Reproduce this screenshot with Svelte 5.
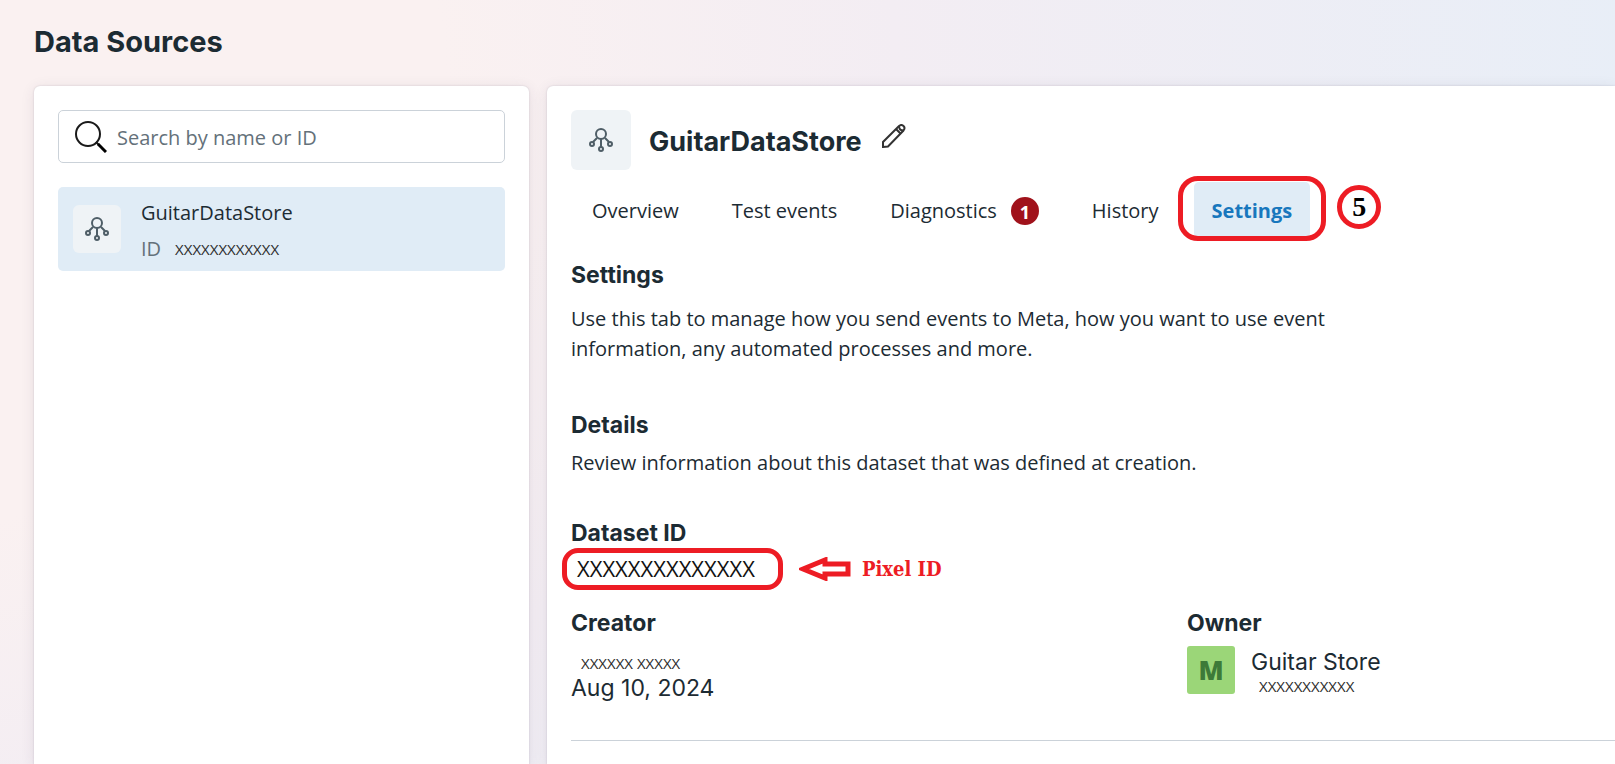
<script lang="ts">
  const tabs = [
    { id: 'overview', label: 'Overview' },
    { id: 'test-events', label: 'Test events' },
    { id: 'diagnostics', label: 'Diagnostics', alerts: 1 },
    { id: 'history', label: 'History' },
    { id: 'settings', label: 'Settings' },
  ];

  let activeTab = $state('settings');
  let query = $state('');
</script>

{#snippet datasetIcon()}
  <svg class="dataset-icon" viewBox="0 0 24 24" aria-hidden="true">
    <circle cx="12" cy="6" r="5" />
    <path d="M12 11v8M8 10l-4 4M16 10l4 4" />
    <circle cx="3" cy="16" r="2" />
    <circle cx="21" cy="16" r="2" />
    <circle cx="12" cy="21" r="2" />
  </svg>
{/snippet}

<div class="page">
  <h1>Data Sources</h1>

  <div class="columns">
    <aside class="card sidebar">
      <label class="search">
        <svg class="search-icon" viewBox="0 0 32 32" aria-hidden="true">
          <circle cx="13" cy="13" r="12" />
          <path class="neck" d="m21 21 3 3" />
          <path class="handle" d="m23 23 8 8" />
        </svg>
        <input type="text" placeholder="Search by name or ID" aria-label="Search by name or ID" bind:value={query} />
      </label>

      <button class="source" type="button">
        <span class="tile small">{@render datasetIcon()}</span>
        <span class="source-text">
          <span class="source-name">GuitarDataStore</span>
          <span class="source-id">ID <span class="masked">XXXXXXXXXXXX</span></span>
        </span>
      </button>
    </aside>

    <main class="card detail">
      <header>
        <span class="tile">{@render datasetIcon()}</span>
        <h2>GuitarDataStore</h2>
        <button class="edit" type="button" aria-label="Edit name">
          <svg viewBox="0 0 24 24" aria-hidden="true">
            <path d="M1 23v-5L17 2q2.500-2 4.500 0t0 4.500L6 22.500Z" />
            <path d="m14 5 4.500 4.500M17 2q0 4.500 4.500 4.500" />
          </svg>
        </button>
      </header>

      <nav class="tabs">
        {#each tabs as tab (tab.id)}
          <button
            class="tab"
            class:active={tab.id === activeTab}
            type="button"
            onclick={() => (activeTab = tab.id)}
          >
            {tab.label}
            {#if tab.alerts}
              <span class="badge">{tab.alerts}</span>
            {/if}
            {#if tab.id === 'settings'}
              <span class="marker tab-marker"></span>
            {/if}
          </button>
        {/each}
        <span class="step">5</span>
      </nav>

      <section class="intro">
        <h3>Settings</h3>
        <p>
          Use this tab to manage how you send events to Meta, how you want to use event
          information, any automated processes and more.
        </p>
      </section>

      <section class="about">
        <h3>Details</h3>
        <p>Review information about this dataset that was defined at creation.</p>
      </section>

      <section class="dataset">
        <h3>Dataset ID</h3>
        <div class="dataset-row">
          <span class="dataset-id">XXXXXXXXXXXXXX<span class="marker id-marker"></span></span>
          <svg class="arrow" viewBox="0 0 52 24" aria-hidden="true">
            <path d="M4 12 26 3v4h23v10H26v4Z" />
          </svg>
          <strong class="note">Pixel ID</strong>
        </div>
      </section>

      <section class="people">
        <div>
          <h3>Creator</h3>
          <p class="creator-name masked">XXXXXX XXXXX</p>
          <p class="plain">Aug 10, 2024</p>
        </div>
        <div>
          <h3>Owner</h3>
          <div class="owner">
            <span class="avatar">M</span>
            <div class="owner-text">
              <p class="plain">Guitar Store</p>
              <p class="owner-id masked">XXXXXXXXXXX</p>
            </div>
          </div>
        </div>
      </section>
    </main>
  </div>
</div>

<style>
  :global(body) {
    margin: 0;
  }

  .page {
    --ink: #1c2b33;
    --muted: #64717a;
    --line: #cbd2d9;
    --tint: #e0ecf6;
    --red: #ed1c24;
    --heading: Inter, sans-serif;
    display: flex;
    flex-direction: column;
    box-sizing: border-box;
    min-height: 100vh;
    padding: 24px 0 0 34px;
    overflow: hidden;
    font-family: 'Open Sans', sans-serif;
    font-size: 20px;
    line-height: 30px;
    color: var(--ink);
    background: radial-gradient(
      350% 440% at -25% 10%,
      #faf1f1 0%,
      #faf1f1 15%,
      #f3edf3 23%,
      #e8eef7 36%
    );
  }

  h1,
  h2,
  h3,
  p {
    margin: 0;
  }

  h1,
  h2,
  h3 {
    font-family: var(--heading);
    font-weight: 700;
  }

  h1 {
    font-size: 29px;
    line-height: 36px;
  }

  h2 {
    padding-top: 4px;
    font-size: 27px;
    line-height: 36px;
  }

  h3 {
    font-size: 23px;
    line-height: 30px;
  }

  button {
    padding: 0;
    border: 0;
    font: inherit;
    color: inherit;
    background: none;
    cursor: pointer;
  }

  .columns {
    display: grid;
    grid-template-columns: 495px 1fr;
    flex: 1;
    gap: 18px;
    margin-top: 26px;
  }

  .card {
    background: #fff;
    border-radius: 6px 6px 0 0;
    box-shadow:
      0 0 2px rgb(60 50 80 / 20%),
      0 2px 14px rgb(60 50 80 / 10%);
  }

  .sidebar {
    padding: 24px;
  }

  .search {
    display: flex;
    align-items: center;
    gap: 10px;
    height: 51px;
    padding: 0 16px;
    border: 1px solid var(--line);
    border-radius: 5px;
  }

  .search input {
    flex: 1;
    min-width: 0;
    padding: 2px 0 0;
    border: 0;
    outline: 0;
    font: inherit;
    color: inherit;
  }

  .search input::placeholder {
    color: var(--muted);
    opacity: 1;
  }

  .search-icon {
    width: 32px;
    height: 32px;
    fill: none;
    stroke: #1a1a1a;
    stroke-width: 2;
  }

  .search-icon .handle {
    stroke: #000;
    stroke-width: 3;
  }

  .source {
    display: flex;
    align-items: center;
    gap: 20px;
    width: 100%;
    height: 84px;
    margin-top: 24px;
    padding: 0 15px;
    border-radius: 5px;
    text-align: left;
    background: var(--tint);
  }

  .source-text {
    display: flex;
    flex-direction: column;
    gap: 6px;
    padding-top: 4px;
  }

  .source-id {
    display: flex;
    gap: 14px;
    color: var(--muted);
  }

  .tile {
    display: grid;
    place-items: center;
    width: 60px;
    height: 60px;
    border-radius: 6px;
    background: #eff3f6;
  }

  .tile.small {
    width: 48px;
    height: 48px;
  }

  .dataset-icon {
    width: 24px;
    height: 24px;
    fill: none;
    stroke: #4f5e67;
    stroke-width: 2;
  }

  .masked {
    font-size: 15px;
    color: #2b2b2b;
  }

  .detail {
    padding: 24px 0 24px 24px;
    border-top-right-radius: 0;
  }

  header {
    display: flex;
    align-items: center;
    gap: 18px;
  }

  .edit {
    padding: 0 2px 8px;
  }

  .edit svg {
    display: block;
    width: 24px;
    height: 24px;
    fill: none;
    stroke: #333;
    stroke-width: 2;
  }

  .tabs {
    display: flex;
    align-items: center;
    gap: 17px;
    margin-top: 12px;
    padding-left: 3px;
  }

  .tab {
    position: relative;
    display: flex;
    align-items: center;
    box-sizing: border-box;
    gap: 14px;
    height: 56px;
    padding: 2px 18px 0;
    border-radius: 5px;
  }

  .tab.active {
    font-weight: 700;
    color: #1877bd;
    background: var(--tint);
  }

  .badge {
    display: grid;
    place-items: center;
    width: 28px;
    height: 28px;
    border-radius: 50%;
    font-size: 18px;
    font-weight: 700;
    color: #fff;
    background: #a0121b;
  }

  .marker {
    position: absolute;
    border: 5px solid var(--red);
    pointer-events: none;
  }

  .tab-marker {
    inset: -6px -16px -3px;
    border-radius: 20px;
  }

  .step {
    display: grid;
    place-items: center;
    box-sizing: border-box;
    width: 44px;
    height: 44px;
    margin: 0 0 6px 10px;
    border: 5px solid var(--red);
    border-radius: 50%;
    font-family: 'Liberation Serif', serif;
    font-size: 28px;
    font-weight: 700;
    color: #000;
  }

  .intro {
    max-width: 780px;
    margin-top: 22px;
  }

  .intro p {
    margin-top: 14px;
  }

  .about {
    margin-top: 46px;
  }

  .about p {
    margin-top: 8px;
  }

  .dataset {
    margin-top: 40px;
  }

  .dataset-row {
    display: flex;
    align-items: center;
    height: 42px;
  }

  .dataset-id {
    position: relative;
    padding: 0 44px 2px 6px;
    font-size: 22px;
    color: #111;
  }

  .id-marker {
    inset: -5px 16px -5px -9px;
    border-radius: 16px;
  }

  .arrow {
    width: 52px;
    height: 24px;
    fill: none;
    stroke: var(--red);
    stroke-width: 5;
  }

  .note {
    margin-left: 11px;
    font-family: 'DejaVu Serif Condensed', 'DejaVu Serif', serif;
    color: var(--red);
  }

  .people {
    display: grid;
    grid-template-columns: 616px 1fr;
    margin-top: 18px;
    padding-bottom: 40px;
    border-bottom: 1px solid var(--line);
  }

  .plain {
    font-family: var(--heading);
    font-size: 23px;
    line-height: 24px;
  }

  .creator-name {
    padding: 12px 0 0 10px;
    line-height: 26px;
  }

  .owner {
    display: flex;
    gap: 16px;
    margin-top: 8px;
  }

  .owner-text {
    padding-top: 4px;
  }

  .owner-id {
    padding-left: 8px;
    line-height: 24px;
  }

  .avatar {
    display: grid;
    place-items: center;
    width: 48px;
    height: 48px;
    border-radius: 3px;
    font-size: 26px;
    font-weight: 800;
    color: #3d7a38;
    background: #9bd678;
  }
</style>
